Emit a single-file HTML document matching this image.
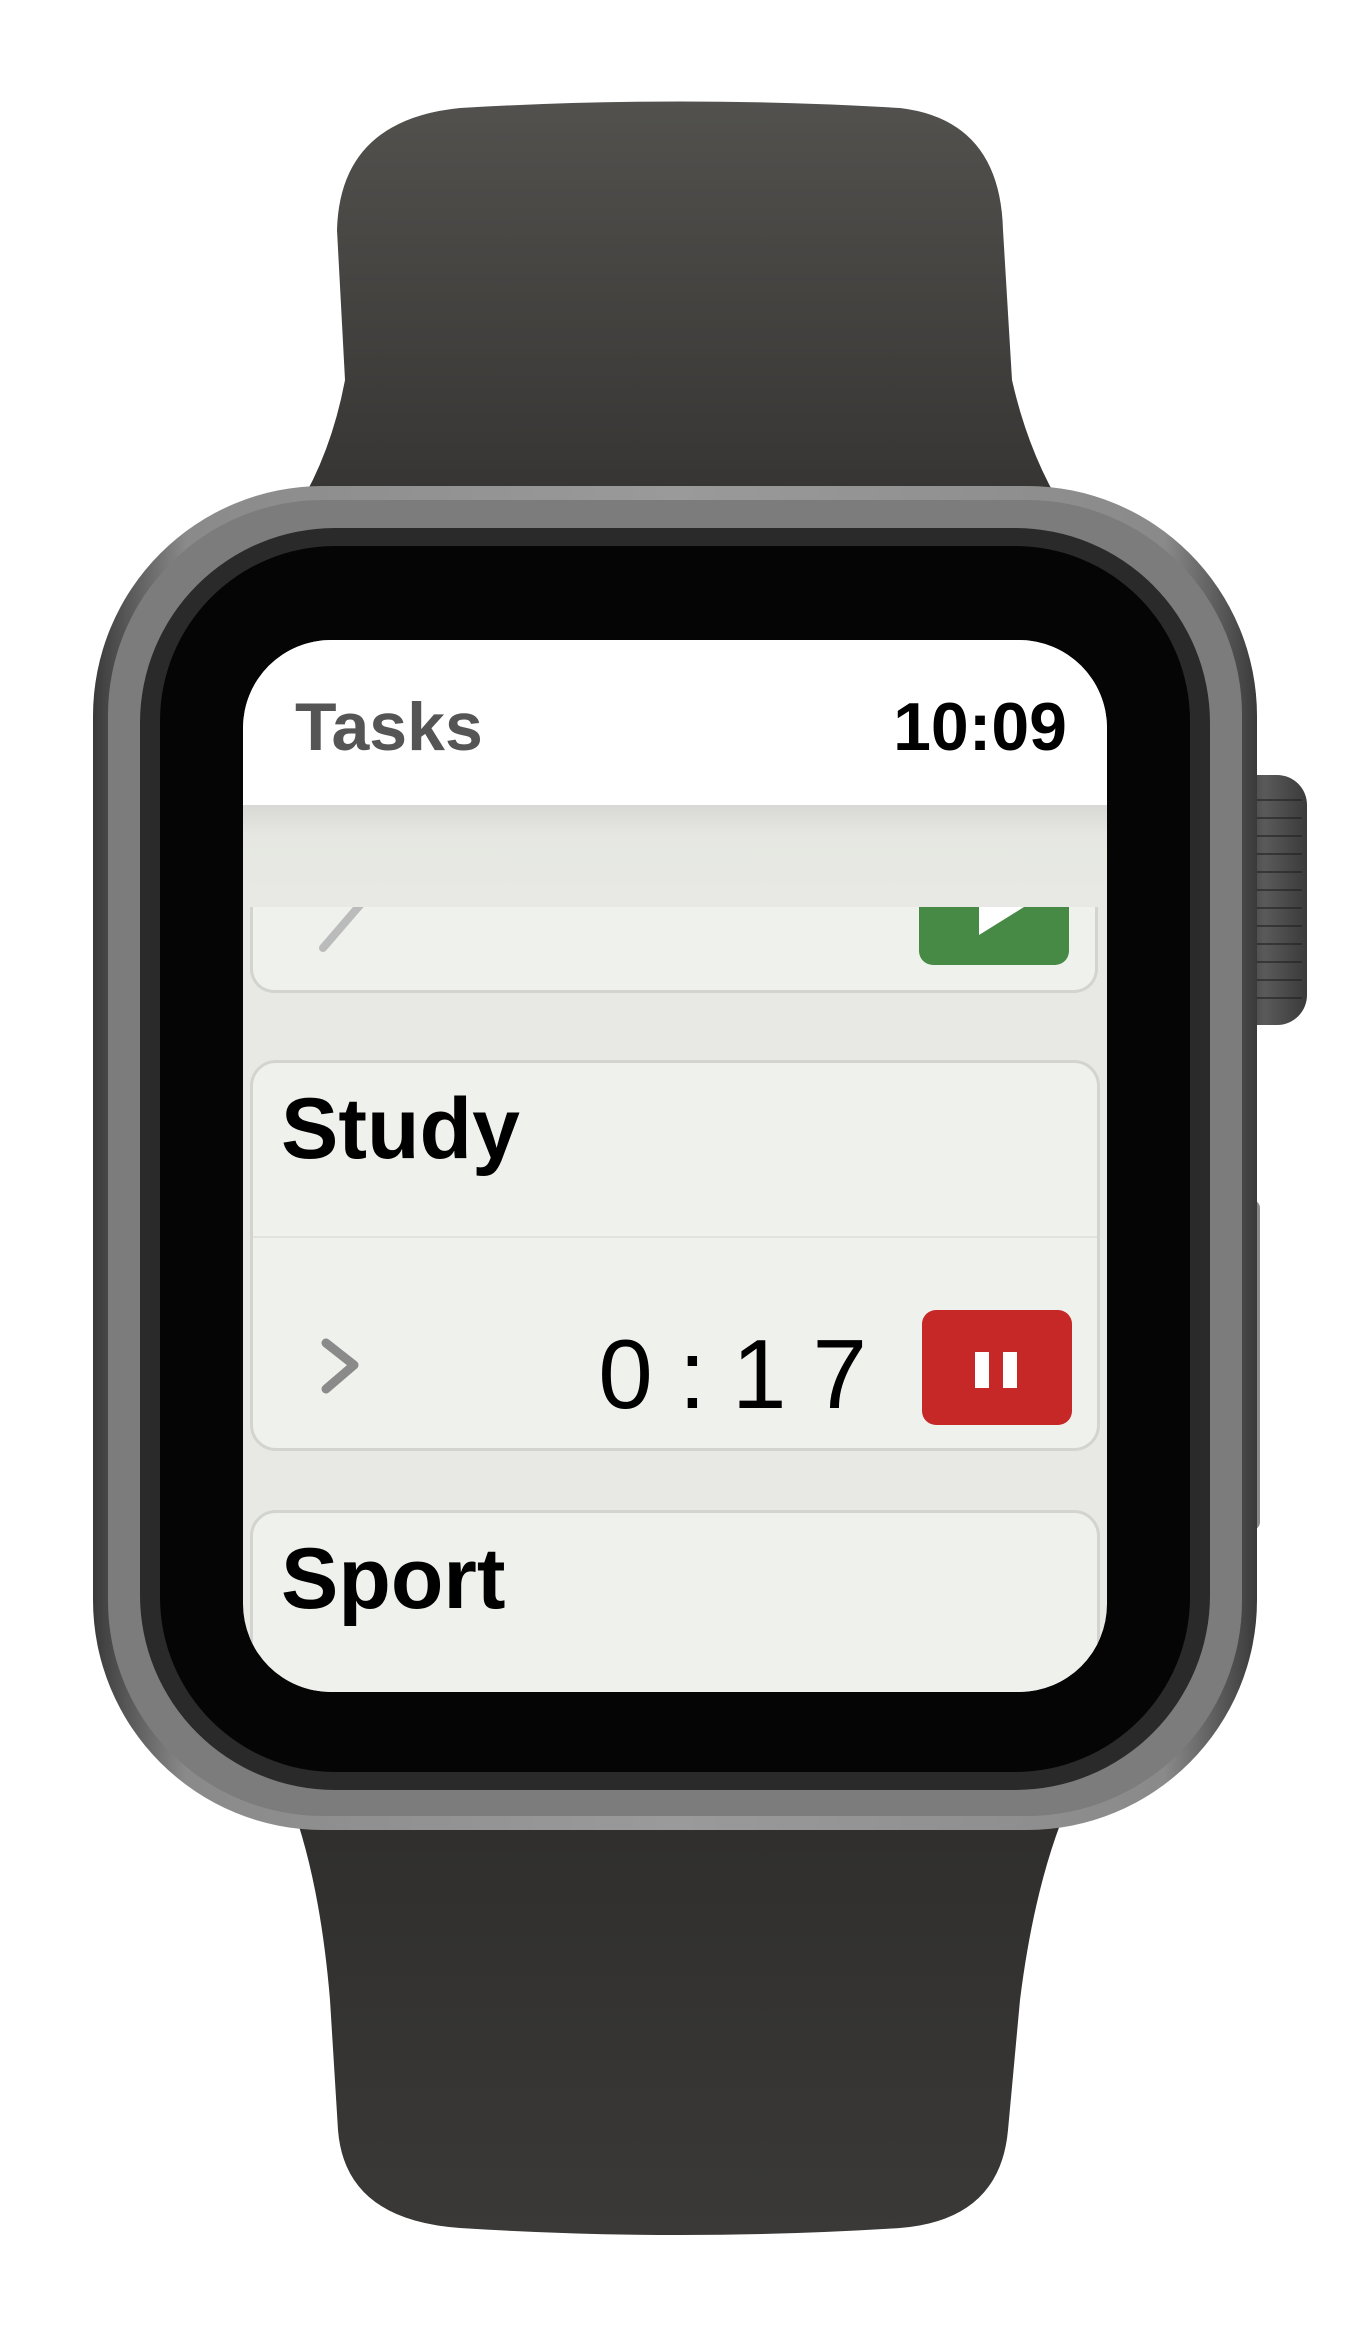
<!DOCTYPE html>
<html><head><meta charset="utf-8"><style>
html,body{margin:0;padding:0;background:#fff;}
body{width:1365px;height:2340px;position:relative;overflow:hidden;font-family:"Liberation Sans",sans-serif;}
.abs{position:absolute;}
</style></head><body>
<svg class="abs" style="left:0;top:0" width="1365" height="2340" viewBox="0 0 1365 2340">
<defs>
<linearGradient id="bandT" x1="0" y1="0" x2="0" y2="1"><stop offset="0" stop-color="#52514e"/><stop offset="1" stop-color="#353331"/></linearGradient>
<linearGradient id="bandB" x1="0" y1="0" x2="0" y2="1"><stop offset="0" stop-color="#2f2e2c"/><stop offset="1" stop-color="#3a3937"/></linearGradient>
<linearGradient id="caseG" x1="0" y1="0" x2="1" y2="0"><stop offset="0" stop-color="#3a3a3a"/><stop offset="0.08" stop-color="#8a8a8a"/><stop offset="0.5" stop-color="#9a9a9a"/><stop offset="0.92" stop-color="#8a8a8a"/><stop offset="1" stop-color="#3a3a3a"/></linearGradient>
<linearGradient id="crownG" x1="0" y1="0" x2="1" y2="0"><stop offset="0" stop-color="#2a2a2a"/><stop offset="0.5" stop-color="#5a5a5a"/><stop offset="1" stop-color="#3a3a3a"/></linearGradient>
</defs>
<path d="M337 230 Q340 120 460 108 Q680 95 900 108 Q1000 120 1003 230 L1012 380 Q1030 460 1070 520 L290 520 Q330 460 345 380 Z" fill="url(#bandT)"/>
<path d="M290 1800 L1070 1800 Q1035 1880 1020 2000 L1008 2130 Q1000 2220 900 2228 Q680 2242 460 2228 Q345 2220 338 2130 L330 2000 Q320 1880 290 1800 Z" fill="url(#bandB)"/>
<rect x="1222" y="775" width="85" height="250" rx="30" fill="url(#crownG)"/>
<g stroke="#222" stroke-width="2" opacity="0.6">
<line x1="1226" y1="800" x2="1302" y2="800"/><line x1="1226" y1="818" x2="1302" y2="818"/><line x1="1226" y1="836" x2="1302" y2="836"/><line x1="1226" y1="854" x2="1302" y2="854"/><line x1="1226" y1="872" x2="1302" y2="872"/><line x1="1226" y1="890" x2="1302" y2="890"/><line x1="1226" y1="908" x2="1302" y2="908"/><line x1="1226" y1="926" x2="1302" y2="926"/><line x1="1226" y1="944" x2="1302" y2="944"/><line x1="1226" y1="962" x2="1302" y2="962"/><line x1="1226" y1="980" x2="1302" y2="980"/><line x1="1226" y1="998" x2="1302" y2="998"/>
</g>
<rect x="1238" y="1200" width="22" height="330" rx="8" fill="#8a8a8a"/>
<rect x="93" y="486" width="1164" height="1344" rx="230" fill="url(#caseG)"/>
<rect x="108" y="500" width="1134" height="1316" rx="215" fill="#7c7c7c"/>
<rect x="140" y="528" width="1070" height="1262" rx="195" fill="#2a2a2a"/>
<rect x="160" y="546" width="1030" height="1226" rx="175" fill="#050505"/>
</svg>
<div class="abs" style="left:243px;top:640px;width:864px;height:1052px;border-radius:88px;overflow:hidden;background:#e8e9e4;">
  <div class="abs" style="left:0;top:0;width:864px;height:165px;background:#fff;"></div>
  <div class="abs" style="left:52px;top:48px;font-size:68px;color:#555;font-weight:bold;">Tasks</div>
  <div class="abs" style="right:40px;top:48px;font-size:68px;color:#000;font-weight:bold;">10:09</div>
  <!-- card 1 partial -->
  <div class="abs" style="left:7px;top:170px;width:848px;height:183px;background:#eff1ec;border:3px solid #d3d3cf;border-top:none;border-radius:0 0 24px 24px;box-sizing:border-box;"></div>
  <svg class="abs" style="left:60px;top:200px" width="80" height="120"><polyline points="20,22 57,65 20,108" fill="none" stroke="#bbb" stroke-width="8" stroke-linecap="round" stroke-linejoin="round"/></svg>
  <div class="abs" style="left:676px;top:240px;width:150px;height:85px;background:#478a45;border-radius:0 0 14px 14px;"></div>
  <svg class="abs" style="left:676px;top:267px" width="150" height="40"><polygon points="60,0 105,0 60,28" fill="#fff"/></svg>
  <!-- header gray band -->
  <div class="abs" style="left:0;top:165px;width:864px;height:102px;background:linear-gradient(#d8d8d4,#e6e7e2 30%,#e8e9e4);"></div>
  <!-- card 2 -->
  <div class="abs" style="left:7px;top:420px;width:850px;height:391px;background:#eff1ec;border:3px solid #d3d3cf;border-radius:26px;box-sizing:border-box;"></div>
  <div class="abs" style="left:10px;top:596px;width:844px;height:2px;background:#e2e3de;"></div>
  <div class="abs" style="left:38px;top:440px;font-size:86px;color:#000;font-weight:bold;">Study</div>
  <svg class="abs" style="left:75px;top:695px" width="60" height="70"><polyline points="8,8 36,30 8,54" fill="none" stroke="#8a8a8a" stroke-width="9" stroke-linecap="round" stroke-linejoin="round"/></svg>
  <div class="abs" style="left:220px;top:678px;width:430px;text-align:right;font-size:98px;color:#000;letter-spacing:26px;">0:17</div>
  <div class="abs" style="left:679px;top:670px;width:150px;height:115px;background:#c62828;border-radius:14px;"></div>
  <div class="abs" style="left:732px;top:712px;width:14px;height:36px;background:#fff;"></div>
  <div class="abs" style="left:760px;top:712px;width:14px;height:36px;background:#fff;"></div>
  <!-- card 3 -->
  <div class="abs" style="left:7px;top:870px;width:850px;height:300px;background:#eff1ec;border:3px solid #d3d3cf;border-radius:26px;box-sizing:border-box;"></div>
  <div class="abs" style="left:38px;top:890px;font-size:86px;color:#000;font-weight:bold;">Sport</div>
</div>
</body></html>
